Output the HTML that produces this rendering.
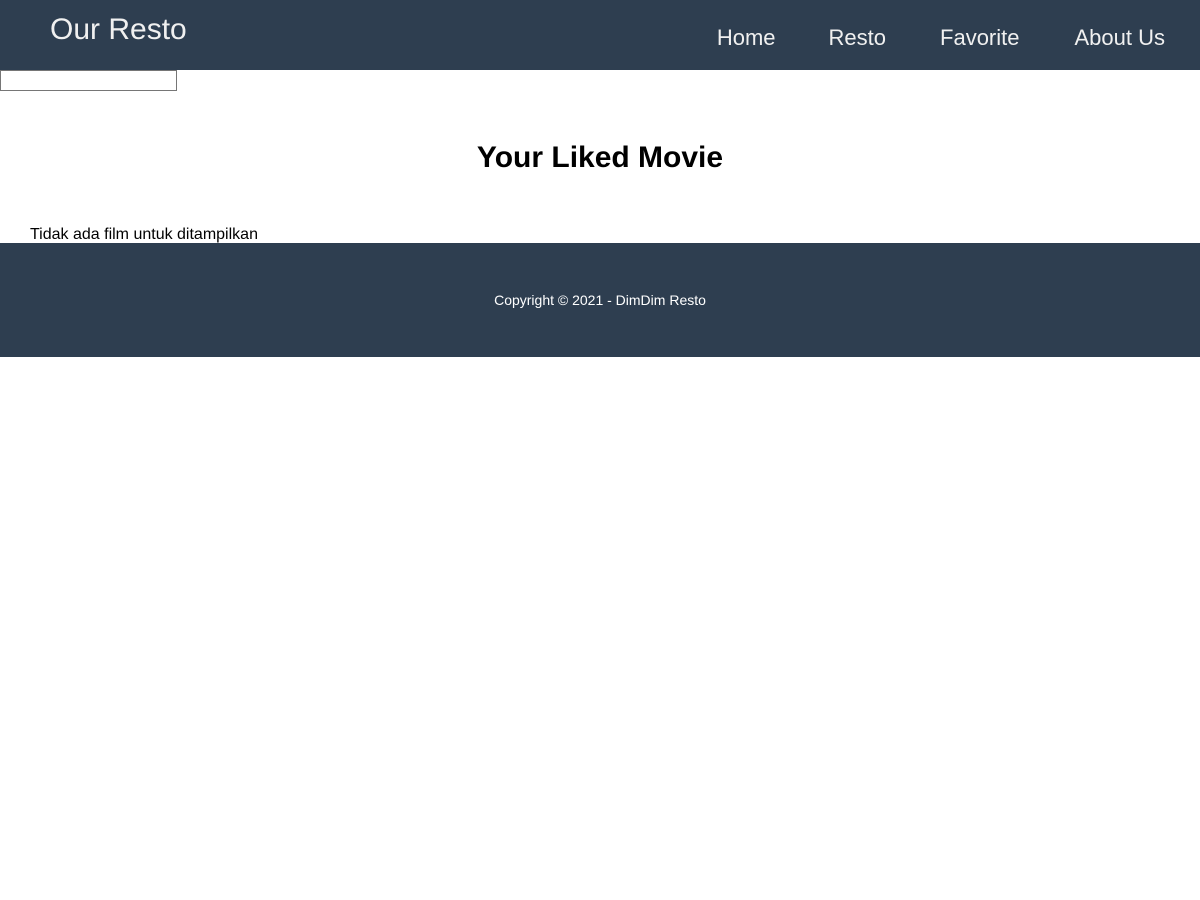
<!DOCTYPE html>
<html><head><meta charset="utf-8"><style>
*{box-sizing:border-box}
body{margin:0;font-family:"Liberation Sans",Arial,sans-serif;background:#fff;width:1200px;height:900px;overflow:hidden}
header{background:#2e3e50;height:70px;position:relative;color:#f0f0f0}
.logo{position:absolute;left:50px;top:13px;font-size:30px;line-height:34px}
nav{position:absolute;right:0;top:25px;display:flex}
nav a{color:#f0f0f0;text-decoration:none;font-size:22px;line-height:26px;margin-right:35px;margin-left:20px}
nav a:first-child{margin-right:33px}
nav a:nth-child(2){margin-right:34px}
input{position:absolute;left:0;top:70px;width:177px;height:21px;border:1px solid #767676;margin:0;padding:0}
h2{position:absolute;left:0;width:1200px;text-align:center;top:140px;margin:0;font-size:30px;line-height:36px}
.empty{position:absolute;left:30px;top:225px;font-size:16px;line-height:19px;color:#000}
footer{position:absolute;left:0;top:243px;width:1200px;height:114px;background:#2e3e50;color:#fff;text-align:center;font-size:14px;line-height:114px}
</style></head><body>
<header><div class="logo">Our Resto</div>
<nav><a>Home</a><a>Resto</a><a>Favorite</a><a>About Us</a></nav></header>
<input type="text">
<h2>Your Liked Movie</h2>
<div class="empty">Tidak ada film untuk ditampilkan</div>
<footer>Copyright © 2021 - DimDim Resto</footer>
</body></html>
